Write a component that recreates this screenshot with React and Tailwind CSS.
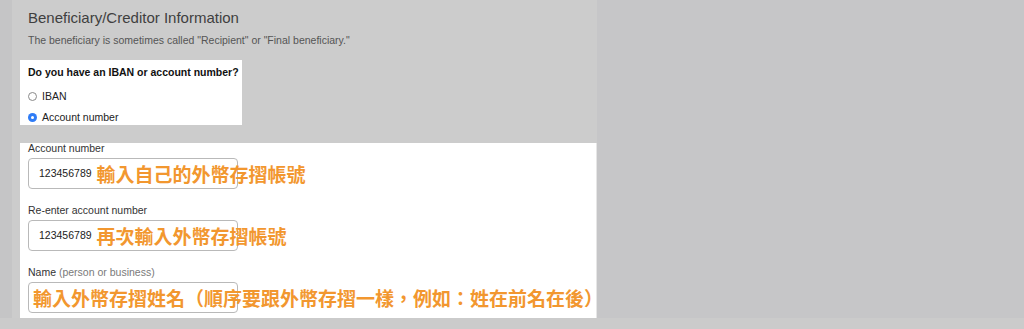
const sans = "font-['Liberation_Sans','Helvetica',Arial,sans-serif]";
const cjk = "font-['Noto_Sans_CJK_TC','Noto_Sans_CJK_SC',sans-serif]";

function Radio({ checked, label }) {
  return (
    <div className="flex items-center gap-[5px] h-[14px]">
      {checked ? (
        <span className="w-[9px] h-[9px] rounded-full bg-[#2f7cf6] flex items-center justify-center">
          <span className="w-[3px] h-[3px] rounded-full bg-white" />
        </span>
      ) : (
        <span className="w-[9px] h-[9px] rounded-full border border-[#8a8a8a] bg-white" />
      )}
      <span className="text-[10.5px] leading-[14px] text-[#222]">{label}</span>
    </div>
  );
}

function Field({ label, hint, value, note, first }) {
  return (
    <div className={first ? '' : 'mt-[16px]'}>
      <div className="text-[10.5px] leading-[10px] text-[#333] mb-[5px]">
        {label}
        {hint && <span className="text-[#7a7a7a]"> {hint}</span>}
      </div>
      <div className="w-[210px] h-[31px] rounded-[4px] border border-[#b9b9b9] bg-white flex items-center whitespace-nowrap">
        {value ? (
          <>
            <span className="pl-[10px] text-[10.5px] text-[#222]">{value}</span>
            <span className={`${cjk} ml-[5px] text-[19px] font-bold text-[#f2972f] leading-none`}>{note}</span>
          </>
        ) : (
          <span className={`${cjk} pl-[4px] text-[19px] font-bold text-[#f2972f] leading-none`}>{note}</span>
        )}
      </div>
    </div>
  );
}

export default function App() {
  return (
    <div className={`${sans} w-[1024px] h-[329px] flex flex-col overflow-hidden`}>
      <div className="flex h-[318px]">
        <div className="w-[12px] bg-[#c5c5c6]" />
        <div className="w-[585px] bg-[#cccccc] pl-[8px] flex flex-col">
          <div className="pl-[8px] pt-[9px] text-[15px] leading-[18px] text-[#3f3f3f]">
            Beneficiary/Creditor Information
          </div>
          <div className="pl-[8px] mt-[6px] text-[10.5px] leading-[14px] text-[#555]">
            The beneficiary is sometimes called "Recipient" or "Final beneficiary."
          </div>
          <div className="mt-[13px] w-[222px] h-[65px] bg-white pl-[8px] pt-[5px]">
            <div className="text-[10.5px] leading-[14px] font-bold text-[#111]">
              Do you have an IBAN or account number?
            </div>
            <div className="mt-[10px]">
              <Radio label="IBAN" />
            </div>
            <div className="mt-[7px]">
              <Radio checked label="Account number" />
            </div>
          </div>
          <div className="mt-[18px] flex-1 bg-white border-r border-[#e6e6e6] pl-[8px]">
            <Field first label="Account number" value="123456789" note="輸入自己的外幣存摺帳號" />
            <Field label="Re-enter account number" value="123456789" note="再次輸入外幣存摺帳號" />
            <Field
              label="Name"
              hint="(person or business)"
              note="輸入外幣存摺姓名（順序要跟外幣存摺一樣，例如：姓在前名在後）"
            />
          </div>
        </div>
        <div className="flex-1 bg-[#c6c6c8]" />
      </div>
      <div className="flex-1 bg-[#cbcbcb]" />
    </div>
  );
}
